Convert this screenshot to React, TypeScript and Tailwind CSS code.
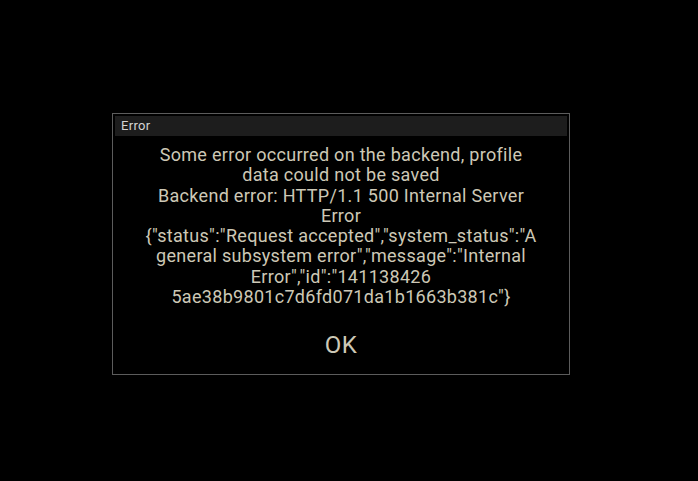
import React from 'react';

const lines = [
    'Some error occurred on the backend, profile',
    'data could not be saved',
    'Backend error: HTTP/1.1 500 Internal Server',
    'Error',
    '{"status":"Request accepted","system_status":"A',
    'general subsystem error","message":"Internal',
    'Error","id":"141138426',
    '5ae38b9801c7d6fd071da1b1663b381c"}',
];

const App: React.FC = () => {
    return (
        <div className="w-[698px] h-[481px] bg-black pt-[113px] pl-[112px]" style={{ fontFamily: 'Roboto, "DejaVu Sans", sans-serif' }}>
            <div className="w-[458px] h-[262px] border border-[#5c5c5c] p-[2px] flex flex-col">
                <div className="h-[20px] bg-[#1d1d1d] px-[6px] text-[13px] leading-[20px] text-[#d4d4d4] tracking-[0.3px]">
                    Error
                </div>
                <div className="flex flex-col items-center pt-[9px] text-[18px] leading-[20.3px] text-[#cdc8b6] tracking-[0.3px]">
                    {lines.map((l, i) => (
                        <div key={i} className="whitespace-nowrap">{l}</div>
                    ))}
                </div>
                <div className="flex justify-center mt-[24px]">
                    <button className="text-[24px] leading-[28px] text-[#cdc8b6] tracking-[0.5px]">OK</button>
                </div>
            </div>
        </div>
    );
};

export default App;
